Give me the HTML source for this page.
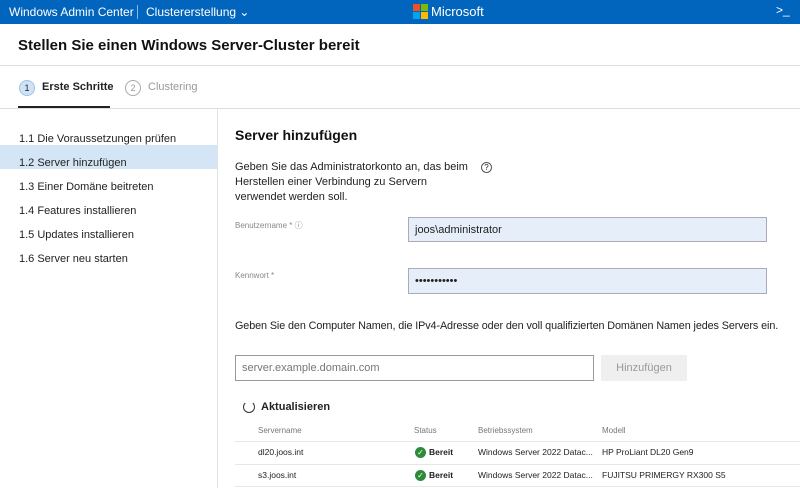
<!DOCTYPE html><html><head><style>
*{margin:0;padding:0;box-sizing:border-box}
body{width:800px;height:488px;overflow:hidden;background:#fff;font-family:"Liberation Sans",sans-serif;color:#222;position:relative}
.a{position:absolute;white-space:nowrap}
</style></head><body>
<div class="a" style="left:0;top:0;width:800px;height:24px;background:#0265bd"></div>
<div class="a" style="left:9px;top:5px;color:#fff;font-size:12px">Windows Admin Center</div>
<div class="a" style="left:137px;top:5px;width:1px;height:14px;background:#8db6e0"></div>
<div class="a" style="left:146px;top:5px;color:#fff;font-size:12px">Clustererstellung &#8964;</div>
<div class="a" style="left:413px;top:4px;width:7px;height:7px;background:#f25022"></div>
<div class="a" style="left:421px;top:4px;width:7px;height:7px;background:#7fba00"></div>
<div class="a" style="left:413px;top:12px;width:7px;height:7px;background:#00a4ef"></div>
<div class="a" style="left:421px;top:12px;width:7px;height:7px;background:#ffb900"></div>
<div class="a" style="left:431px;top:4px;color:#fff;font-size:13px">Microsoft</div>
<div class="a" style="left:776px;top:3px;color:#fff;font-size:12px">&gt;_</div>
<div class="a" style="left:18px;top:37px;font-size:15px;font-weight:bold;color:#111">Stellen Sie einen Windows Server-Cluster bereit</div>
<div class="a" style="left:0;top:65px;width:800px;height:1px;background:#ddd"></div>
<div class="a" style="left:19px;top:80px;width:16px;height:16px;border-radius:50%;background:#cfe3f5;border:1px solid #9cc3e6;font-size:9px;text-align:center;line-height:14px">1</div>
<div class="a" style="left:42px;top:81px;font-size:11px;font-weight:bold">Erste Schritte</div>
<div class="a" style="left:125px;top:80px;width:16px;height:16px;border-radius:50%;border:1px solid #aaa;font-size:9px;text-align:center;line-height:14px;color:#999">2</div>
<div class="a" style="left:148px;top:81px;font-size:11px;color:#999">Clustering</div>
<div class="a" style="left:18px;top:106px;width:92px;height:2px;background:#222"></div>
<div class="a" style="left:0;top:108px;width:800px;height:1px;background:#ddd"></div>
<div class="a" style="left:217px;top:109px;width:1px;height:379px;background:#e3e3e3"></div>
<div class="a" style="left:0;top:145px;width:217px;height:24px;background:#d4e6f5"></div>
<div class="a" style="left:19px;top:127px;font-size:11px;line-height:24px">1.1 Die Voraussetzungen prüfen<br>1.2 Server hinzufügen<br>1.3 Einer Domäne beitreten<br>1.4 Features installieren<br>1.5 Updates installieren<br>1.6 Server neu starten</div>
<div class="a" style="left:235px;top:127px;font-size:14px;font-weight:bold;color:#111">Server hinzufügen</div>
<div class="a" style="left:235px;top:160px;font-size:11px;line-height:15px">Geben Sie das Administratorkonto an, das beim<br>Herstellen einer Verbindung zu Servern<br>verwendet werden soll.</div>
<div class="a" style="left:481px;top:162px;width:11px;height:11px;border-radius:50%;border:1px solid #555;font-size:8px;text-align:center;line-height:9px">?</div>
<div class="a" style="left:235px;top:220px;font-size:8px;color:#888">Benutzername * &#9432;</div>
<div class="a" style="left:408px;top:217px;width:359px;height:25px;background:#e6eefa;border:1px solid #aab;font-size:11px;padding:6px 6px">joos\administrator</div>
<div class="a" style="left:235px;top:271px;font-size:8px;color:#888">Kennwort *</div>
<div class="a" style="left:408px;top:268px;width:359px;height:26px;background:#e6eefa;border:1px solid #aab;font-size:11px;padding:6px 6px">•••••••••••</div>
<div class="a" style="left:235px;top:320px;font-size:10.8px;letter-spacing:-0.1px">Geben Sie den Computer Namen, die IPv4-Adresse oder den voll qualifizierten Domänen Namen jedes Servers ein.</div>
<div class="a" style="left:235px;top:355px;width:359px;height:26px;border:1px solid #999;font-size:11px;color:#777;padding:6px 6px">server.example.domain.com</div>
<div class="a" style="left:601px;top:355px;width:86px;height:26px;background:#efefef;font-size:11px;color:#999;text-align:center;line-height:26px">Hinzufügen</div>
<div class="a" style="left:243px;top:401px;width:12px;height:12px;border-radius:50%;border:1.5px solid #333;border-top-color:transparent"></div>
<div class="a" style="left:261px;top:401px;font-size:11px;font-weight:bold">Aktualisieren</div>
<div class="a" style="left:258px;top:426px;font-size:8px;color:#777">Servername</div>
<div class="a" style="left:414px;top:426px;font-size:8px;color:#777">Status</div>
<div class="a" style="left:478px;top:426px;font-size:8px;color:#777">Betriebssystem</div>
<div class="a" style="left:602px;top:426px;font-size:8px;color:#777">Modell</div>
<div class="a" style="left:235px;top:441px;width:565px;height:1px;background:#e6e6e6"></div>
<div class="a" style="left:235px;top:464px;width:565px;height:1px;background:#e6e6e6"></div>
<div class="a" style="left:235px;top:486px;width:565px;height:1px;background:#e6e6e6"></div>
<div class="a" style="left:258px;top:447px;font-size:8.5px">dl20.joos.int</div>
<div class="a" style="left:258px;top:470px;font-size:8.5px">s3.joos.int</div>
<div class="a" style="left:415px;top:447px;width:11px;height:11px;border-radius:50%;background:#2e8b3a;color:#fff;font-size:8px;text-align:center;line-height:11px">✓</div>
<div class="a" style="left:415px;top:470px;width:11px;height:11px;border-radius:50%;background:#2e8b3a;color:#fff;font-size:8px;text-align:center;line-height:11px">✓</div>
<div class="a" style="left:429px;top:447px;font-size:8.5px;font-weight:bold">Bereit</div>
<div class="a" style="left:429px;top:470px;font-size:8.5px;font-weight:bold">Bereit</div>
<div class="a" style="left:478px;top:447px;font-size:8.5px">Windows Server 2022 Datac...</div>
<div class="a" style="left:478px;top:470px;font-size:8.5px">Windows Server 2022 Datac...</div>
<div class="a" style="left:602px;top:447px;font-size:8.5px">HP ProLiant DL20 Gen9</div>
<div class="a" style="left:602px;top:470px;font-size:8.5px">FUJITSU PRIMERGY RX300 S5</div>
</body></html>
